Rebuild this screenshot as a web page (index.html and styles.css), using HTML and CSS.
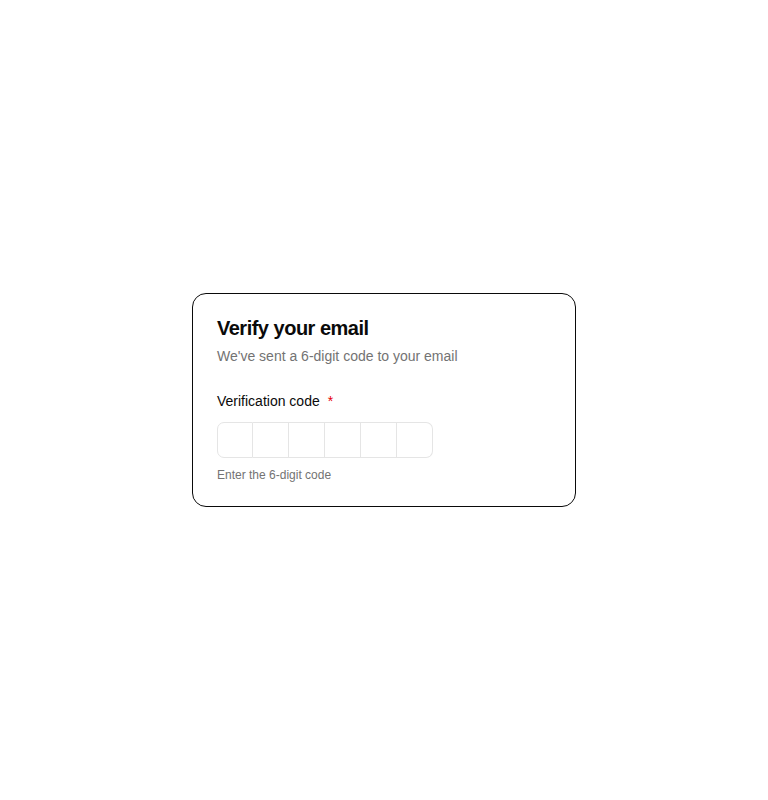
FILE: index.html
```html
<!DOCTYPE html>
<html lang="en">
<head>
<meta charset="utf-8">
<title>Verify your email</title>
<link rel="stylesheet" href="styles.css">
</head>
<body>
<main class="page">
  <section class="card">
    <header class="card-header">
      <h1 class="card-title">Verify your email</h1>
      <p class="card-desc">We've sent a 6-digit code to your email</p>
    </header>
    <div class="field">
      <label class="label" for="otp-0">Verification code <span class="req">*</span></label>
      <div class="otp">
        <input class="otp-slot" id="otp-0" maxlength="1" inputmode="numeric">
        <input class="otp-slot" maxlength="1" inputmode="numeric">
        <input class="otp-slot" maxlength="1" inputmode="numeric">
        <input class="otp-slot" maxlength="1" inputmode="numeric">
        <input class="otp-slot" maxlength="1" inputmode="numeric">
        <input class="otp-slot" maxlength="1" inputmode="numeric">
      </div>
      <p class="hint">Enter the 6-digit code</p>
    </div>
  </section>
</main>
</body>
</html>
```

FILE: styles.css
```css
* { box-sizing: border-box; }
html, body { margin: 0; padding: 0; background: #ffffff; }
body {
  font-family: "Liberation Sans", Arial, sans-serif;
  color: #0a0a0a;
}
.page {
  min-height: 100vh;
  display: flex;
  align-items: center;
  justify-content: center;
}
.card {
  width: 384px;
  border: 1px solid #0a0a0a;
  border-radius: 14px;
  padding: 24px 24px 23px;
  background: #ffffff;
}
.card-header {
  display: flex;
  flex-direction: column;
  gap: 8px;
}
.card-title {
  margin: 0;
  font-size: 20px;
  line-height: 1;
  font-weight: 700;
  letter-spacing: -0.5px;
  color: #0a0a0a;
}
.card-desc {
  margin: 0;
  font-size: 14px;
  line-height: 20px;
  color: #737373;
}
.field {
  margin-top: 28px;
  display: flex;
  flex-direction: column;
}
.label {
  font-size: 14px;
  line-height: 14px;
  font-weight: 400;
  color: #0a0a0a;
}
.req {
  color: #e7000b;
  margin-left: 4px;
}
.otp {
  display: flex;
  margin-top: 14px;
}
.otp-slot {
  width: 36px;
  height: 36px;
  margin: 0;
  padding: 0;
  border: 1px solid #e5e5e5;
  border-left: none;
  background: #ffffff;
  font: inherit;
  font-size: 14px;
  text-align: center;
  outline: none;
  border-radius: 0;
}
.otp-slot:first-child {
  border-left: 1px solid #e5e5e5;
  border-radius: 7px 0 0 7px;
}
.otp-slot:last-child {
  border-radius: 0 7px 7px 0;
}
.hint {
  margin: 9px 0 0;
  font-size: 12px;
  line-height: 16px;
  color: #737373;
}
```
